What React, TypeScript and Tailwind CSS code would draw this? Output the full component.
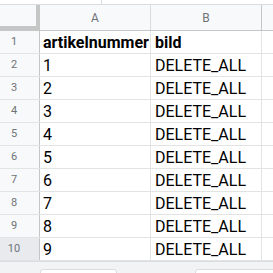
import React from "react";

const rows = [
  ["artikelnummer", "bild"],
  ["1", "DELETE_ALL"],
  ["2", "DELETE_ALL"],
  ["3", "DELETE_ALL"],
  ["4", "DELETE_ALL"],
  ["5", "DELETE_ALL"],
  ["6", "DELETE_ALL"],
  ["7", "DELETE_ALL"],
  ["8", "DELETE_ALL"],
  ["9", "DELETE_ALL"],
];

export default function App() {
  return (
    <div
      className="w-[273px] h-[273px] overflow-hidden bg-white flex flex-col"
      style={{ fontFamily: "Roboto, 'Liberation Sans', sans-serif" }}
    >
      {/* top strip */}
      <div className="h-[5px] shrink-0 border-b border-[#dadce0] flex">
        <div className="w-[102px] border-r border-[#dadce0]" />
      </div>
      {/* column header */}
      <div className="h-[26px] shrink-0 flex bg-[#f8f9fa] border-b border-[#c4c7c5]">
        <div className="w-[40px] shrink-0 relative">
          <div className="absolute right-0 top-0 bottom-0 w-[4px] bg-[#c4c7c5]" />
          <div className="absolute left-0 right-0 bottom-0 h-[4px] bg-[#c4c7c5]" />
        </div>
        <div className="w-[111px] shrink-0 border-r border-[#d9dbdd] flex items-center justify-center text-[12px] text-[#6f7378]">
          A
        </div>
        <div className="w-[111px] shrink-0 border-r border-[#c4c7c5] flex items-center justify-center text-[12px] text-[#6f7378]">
          B
        </div>
        <div className="flex-1" />
      </div>
      {/* rows */}
      {rows.map((r, i) => (
        <div key={i} className="h-[23px] shrink-0 flex border-b border-[#e2e3e3]">
          <div
            className={`w-[40px] shrink-0 border-r border-[#c4c7c5] flex items-center justify-center pr-[11px] text-[11px] text-[#6f7378] ${
              i === 9 ? "bg-[#e8eaed]" : "bg-[#f8f9fa]"
            }`}
          >
            {i + 1}
          </div>
          <div
            className={`w-[111px] shrink-0 border-r border-[#e2e3e3] flex items-end pl-[3px] pb-[1px] text-[16px] leading-[19px] text-black whitespace-nowrap ${
              i === 0 ? "font-bold" : ""
            }`}
          >
            {r[0]}
          </div>
          <div
            className={`w-[111px] shrink-0 border-r border-[#e2e3e3] flex items-end pl-[4px] pb-[1px] text-[16px] leading-[19px] text-black whitespace-nowrap ${
              i === 0 ? "font-bold" : ""
            }`}
          >
            {r[1]}
          </div>
          <div className="flex-1" />
        </div>
      ))}
      {/* bottom bar */}
      <div className="flex-1 bg-[#f1f3f4] border-t border-[#dadce0] relative">
        <div className="absolute left-[40px] top-[7px] w-[77px] h-[20px] bg-white border border-[#dadce0] rounded-[3px]" />
        <div className="absolute left-[195px] top-[7px] w-[90px] h-[20px] bg-white border border-[#dadce0] rounded-[3px]" />
      </div>
    </div>
  );
}
